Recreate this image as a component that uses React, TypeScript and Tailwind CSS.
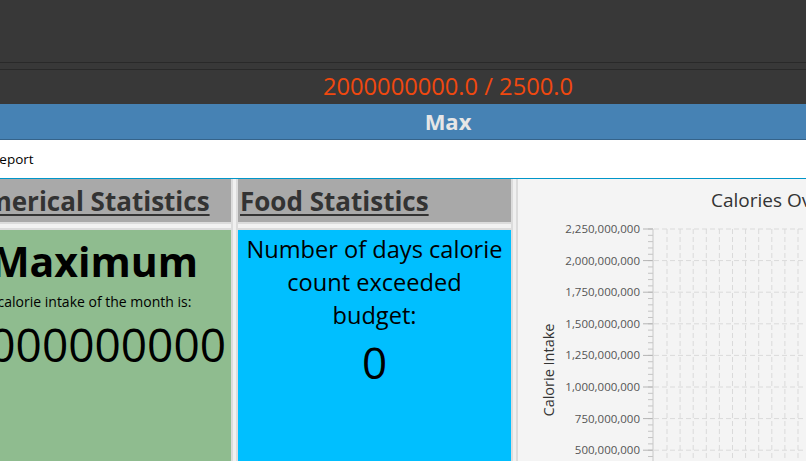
import React from "react";

const font = { fontFamily: '"Open Sans", "Noto Sans", sans-serif' };

const majors = [
  "2,250,000,000",
  "2,000,000,000",
  "1,750,000,000",
  "1,500,000,000",
  "1,250,000,000",
  "1,000,000,000",
  "750,000,000",
  "500,000,000",
  "250,000,000",
];

function Chart() {
  const top = 50;
  const step = 31.6;
  const axisX = 135;
  const minor: number[] = [];
  for (let i = 0; i < 40; i++) minor.push(top + (step / 5) * i);
  const vlines: number[] = [];
  for (let x = 149; x < 290; x += 13.1) vlines.push(x);
  return (
    <svg width="288" height="282" className="block">
      <text x="193" y="28" fontSize="19" fill="#333" fontFamily="Open Sans, sans-serif">
        Calories Over Time
      </text>
      {majors.map((_, i) => (
        <line key={"h" + i} x1={axisX + 1} x2="288" y1={top + step * i} y2={top + step * i} stroke="#dadada" strokeDasharray="5 3" />
      ))}
      {vlines.map((x, i) => (
        <line key={"v" + i} x1={x} x2={x} y1={top} y2="282" stroke="#dadada" strokeDasharray="5 3" />
      ))}
      {minor.map((y, i) => (
        <line key={"m" + i} x1="130" x2={axisX} y1={y} y2={y} stroke="#c4c4c4" />
      ))}
      {majors.map((label, i) => (
        <g key={"l" + i}>
          <line x1="125" x2={axisX} y1={top + step * i} y2={top + step * i} stroke="#b4b4b4" />
          <text x="122" y={top + step * i + 4} fontSize="11.5" fill="#555" textAnchor="end" fontFamily="Open Sans, sans-serif">
            {label}
          </text>
        </g>
      ))}
      <line x1={axisX} x2={axisX} y1={top} y2="282" stroke="#c8c8c8" />
      <text
        x="32"
        y="191"
        fontSize="14.5"
        fill="#333"
        textAnchor="middle"
        dominantBaseline="middle"
        transform="rotate(-90 32 191)"
        fontFamily="Open Sans, sans-serif"
      >
        Calorie Intake
      </text>
    </svg>
  );
}

function Divider() {
  return <div className="w-[7px] shrink-0 bg-[#f0f0f0] border-x-2 border-[#dcdcdc]" />;
}

function Header({ title, shift }: { title: string; shift?: boolean }) {
  return (
    <>
      <div className="h-[43px] bg-[#a9a9a9] flex items-center pl-[2px] pt-[2px]">
        <span
          className={
            "text-[26px] font-bold underline underline-offset-[3px] decoration-[2px] text-[#333] whitespace-nowrap " +
            (shift ? "-ml-[12px]" : "")
          }
        >
          {title}
        </span>
      </div>
      <div className="h-[8px] bg-[#f2f2f2] border-y-2 border-[#dcdcdc]" />
    </>
  );
}

export default function App() {
  return (
    <div className="w-[806px] h-[461px] overflow-hidden bg-[#383838] flex flex-col" style={font}>
      <div className="h-[62px] shrink-0" />
      <div className="h-px bg-[#292929] shrink-0" />
      <div className="h-[6px] shrink-0" />
      <div className="h-px bg-[#292929] shrink-0" />
      <div className="h-[34px] shrink-0 flex items-center justify-center pl-[90px]">
        <span className="text-[23.7px] text-[#f0480f] leading-none">2000000000.0 / 2500.0</span>
      </div>
      <div className="h-[36px] shrink-0 bg-[#4682b4] border-b border-[#35638a] flex items-center justify-center pl-[90px]">
        <span className="text-[22px] font-bold text-[#e6e6e6]">Max</span>
      </div>
      <div className="h-[39px] shrink-0 bg-white border-b border-[#0096c9] flex items-center">
        <span className="text-[13.5px] text-black -ml-[9px]">Report</span>
      </div>
      <div className="flex-1 flex bg-[#f4f4f4] -ml-[42px] w-[1000px]">
        <div className="w-[273px] shrink-0 flex flex-col">
          <Header title="Numerical Statistics" shift />
          <div className="flex-1 bg-[#8fbc8f] flex flex-col items-center text-black">
            <div className="text-[41px] font-bold leading-none mt-[11px]">Maximum</div>
            <div className="text-[14px] mt-[9px]">calorie intake of the month is:</div>
            <div className="text-[46px] leading-none mt-[9px]">2000000000</div>
          </div>
        </div>
        <Divider />
        <div className="w-[273px] shrink-0 flex flex-col">
          <Header title="Food Statistics" />
          <div className="flex-1 bg-[#00bfff] flex flex-col items-center text-black text-center">
            <div className="text-[23.6px] leading-[33px] px-2 mt-[3px]">
              Number of days calorie count exceeded budget:
            </div>
            <div className="text-[44px] leading-none mt-[8px]">0</div>
          </div>
        </div>
        <Divider />
        <div className="flex-1 bg-[#f4f4f4]">
          <Chart />
        </div>
      </div>
    </div>
  );
}
